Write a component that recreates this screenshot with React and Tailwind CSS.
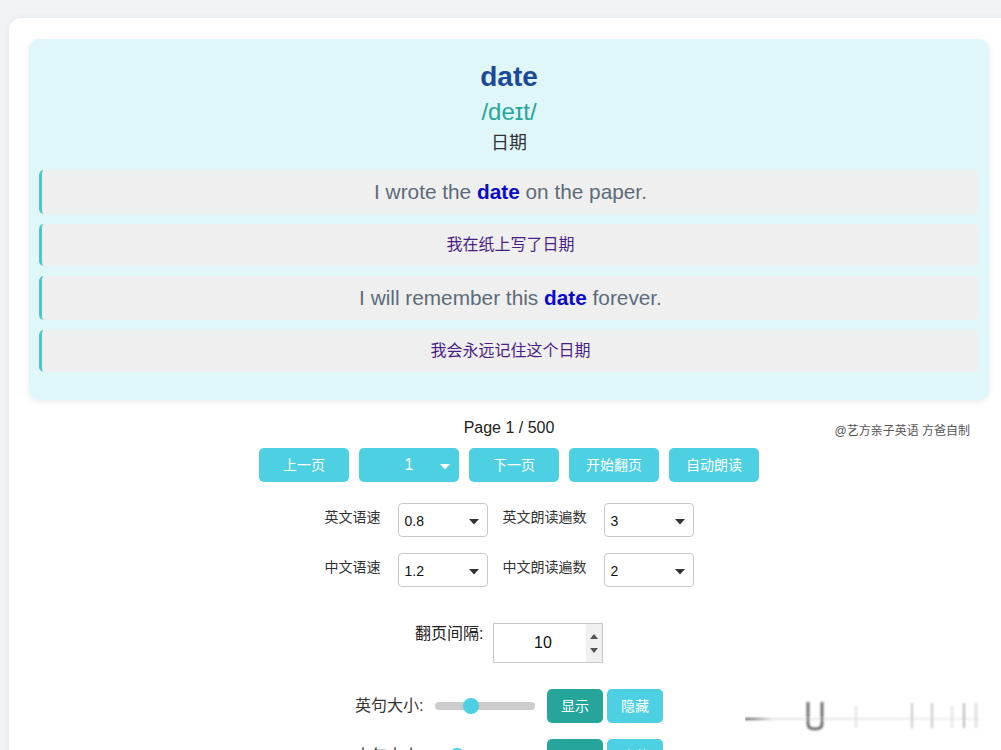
import React from "react";

const FONT = { fontFamily: '"Liberation Sans", Arial, "Noto Sans CJK SC", sans-serif' };

function Caret({ className = "" }) {
  return (
    <svg width="10" height="6" viewBox="0 0 10 6" className={className}>
      <path d="M0 0 L10 0 L5 5.5 Z" fill="currentColor" />
    </svg>
  );
}

function Select({ value }) {
  return (
    <div className="w-[90px] h-[34px] border border-[#c8c8c8] rounded-[4px] bg-white flex items-center justify-between pl-[6px] pr-[8px] text-[14px] text-[#111]">
      <span className="mt-[2px]">{value}</span>
      <Caret className="text-[#333] mt-[3px]" />
    </div>
  );
}

function CyanBtn({ children }) {
  return (
    <div className="w-[90px] h-[34px] rounded-[5px] bg-[#4dd0e1] text-white text-[14px] flex items-center justify-center">
      {children}
    </div>
  );
}

function SizeRow({ label, thumb }) {
  return (
    <div className="flex items-center justify-center">
      <span className="text-[16px] text-[#333] w-[67px] shrink-0 whitespace-nowrap">{label}</span>
      <div className="ml-[13px] w-[100px] h-[8px] rounded-full bg-[#cccccc] relative shrink-0">
        <div
          className="absolute top-1/2 w-[16px] h-[16px] rounded-full bg-[#4dd0e1] -translate-y-1/2 -translate-x-1/2"
          style={{ left: `${thumb}px` }}
        />
      </div>
      <div className="ml-[12px] w-[56px] h-[34px] rounded-[5px] bg-[#26a69a] text-white text-[14px] flex items-center justify-center shrink-0">显示</div>
      <div className="ml-[4px] w-[56px] h-[34px] rounded-[5px] bg-[#4dd0e1] text-white text-[14px] flex items-center justify-center shrink-0">隐藏</div>
    </div>
  );
}

export default function App() {
  const rows = [
    { type: "en", pre: "I wrote the ", post: " on the paper." },
    { type: "zh", text: "我在纸上写了日期" },
    { type: "en", pre: "I will remember this ", post: " forever." },
    { type: "zh", text: "我会永远记住这个日期" },
  ];
  return (
    <div className="w-full h-[750px] overflow-hidden bg-[#f1f4f7] relative" style={FONT}>
      <div className="mt-[18px] ml-[9px] w-[1000px] h-[800px] bg-white rounded-tl-[12px] shadow-[0_0_6px_rgba(0,0,0,0.06)] px-[20px] pt-[21px]">
        {/* word card */}
        <div className="bg-[#e0f7fa] rounded-[10px] shadow-[0_2px_6px_rgba(0,0,0,0.08)] px-[10px] pt-[20px] pb-[28px]">
          <div className="text-center text-[28px] leading-[36px] font-bold text-[#1b4a98]">date</div>
          <div className="text-center text-[24px] leading-[30px] mt-[2px] text-[#26a69a]">/deɪt/</div>
          <div className="text-center text-[18px] leading-[26px] mt-[3px] text-[#333]">日期</div>
          <div className="mt-[14px] flex flex-col gap-[10px]">
            {rows.map((r, i) =>
              r.type === "en" ? (
                <div key={i} className="bg-[#efefef] border-l-[3px] border-[#4fc3cf] rounded-[5px] py-[10px] text-center text-[20.8px] leading-[24px] text-[#5d6b78]">
                  {r.pre}
                  <b className="text-[#0a0ac8]">date</b>
                  {r.post}
                </div>
              ) : (
                <div key={i} className="bg-[#efefef] border-l-[3px] border-[#4fc3cf] rounded-[5px] py-[10px] text-center text-[16px] leading-[22px] text-[#4a1f85]">
                  {r.text}
                </div>
              )
            )}
          </div>
        </div>

        {/* controls */}
        <div className="relative">
          <div className="absolute right-[19px] top-[22px] text-[12px] text-[#555]">@艺方亲子英语 方爸自制</div>
          <div className="pt-[18px] text-center text-[16px] leading-[20px] text-[#222]">Page 1 / 500</div>
          <div className="mt-[10px] flex justify-center gap-[10px]">
            <CyanBtn>上一页</CyanBtn>
            <div className="w-[100px] h-[34px] rounded-[5px] bg-[#4dd0e1] text-white text-[16px] flex items-center relative">
              <span className="w-full text-center">1</span>
              <Caret className="absolute right-[9px] top-[16px] text-white" />
            </div>
            <CyanBtn>下一页</CyanBtn>
            <CyanBtn>开始翻页</CyanBtn>
            <CyanBtn>自动朗读</CyanBtn>
          </div>

          <div className="mt-[21px] flex flex-col gap-[16px]">
            {[
              ["英文语速", "0.8", "英文朗读遍数", "3"],
              ["中文语速", "1.2", "中文朗读遍数", "2"],
            ].map((r, i) => (
              <div key={i} className="flex items-start justify-center">
                <span className="w-[57px] shrink-0 whitespace-nowrap pt-[4px] text-[14px] leading-[20px] text-[#333]">{r[0]}</span>
                <div className="ml-[16px] shrink-0"><Select value={r[1]} /></div>
                <span className="ml-[15px] w-[86px] shrink-0 whitespace-nowrap pt-[4px] text-[14px] leading-[20px] text-[#333]">{r[2]}</span>
                <div className="ml-[15px] shrink-0"><Select value={r[3]} /></div>
              </div>
            ))}
          </div>

          <div className="mt-[36px] flex items-start justify-center">
            <span className="w-[67px] shrink-0 whitespace-nowrap text-[16px] leading-[22px] text-[#222]">翻页间隔:</span>
            <div className="ml-[11px] w-[110px] h-[40px] border border-[#c8c8c8] flex shrink-0">
              <div className="flex-1 flex items-center justify-center text-[16px] text-[#111] pl-[6px]">10</div>
              <div className="w-[16px] bg-[#f0f0f0] flex flex-col items-center justify-center gap-[9px] text-[#555]">
                <svg width="8" height="5" viewBox="0 0 8 5"><path d="M0 5 L8 5 L4 0 Z" fill="currentColor" /></svg>
                <svg width="8" height="5" viewBox="0 0 8 5"><path d="M0 0 L8 0 L4 5 Z" fill="currentColor" /></svg>
              </div>
            </div>
          </div>

          <div className="mt-[26px] flex flex-col gap-[16px]">
            <SizeRow label="英句大小:" thumb={36} />
            <SizeRow label="中句大小:" thumb={22} />
          </div>
        </div>
      </div>

      {/* faint watermark artifact */}
      <svg className="absolute left-[745px] top-[698px]" width="240" height="36" viewBox="0 0 240 36">
        <defs>
          <linearGradient id="hl" x1="0" x2="1" y1="0" y2="0">
            <stop offset="0" stopColor="#444" />
            <stop offset="0.12" stopColor="#e4e4e4" />
            <stop offset="1" stopColor="#f0f0f0" />
          </linearGradient>
          <filter id="bl"><feGaussianBlur stdDeviation="0.9" /></filter>
        </defs>
        <g filter="url(#bl)">
          <rect x="0" y="20" width="235" height="2" fill="url(#hl)" />
          <path d="M63 4 L63 26 Q63 31 70 31 Q77 31 77 26 L77 4" stroke="#222" strokeWidth="2.5" fill="none" opacity="0.75" />
          <line x1="111" y1="8" x2="111" y2="30" stroke="#d8d8d8" strokeWidth="1.5" />
          <line x1="167" y1="5" x2="167" y2="30" stroke="#c8c8c8" strokeWidth="2" />
          <line x1="187" y1="5" x2="187" y2="30" stroke="#c8c8c8" strokeWidth="2" />
          <line x1="207" y1="8" x2="207" y2="30" stroke="#d8d8d8" strokeWidth="1.5" />
          <line x1="219" y1="5" x2="219" y2="30" stroke="#b8b8b8" strokeWidth="2" />
          <line x1="231" y1="5" x2="231" y2="30" stroke="#c8c8c8" strokeWidth="1.5" />
        </g>
      </svg>
    </div>
  );
}
